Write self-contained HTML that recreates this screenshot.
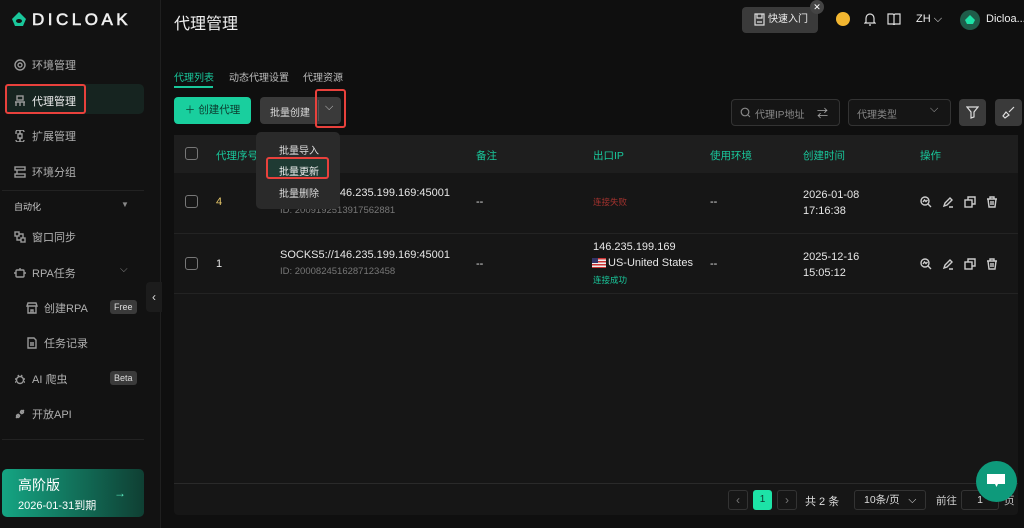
<!DOCTYPE html>
<html><head><meta charset="utf-8"><style>
*{margin:0;padding:0;box-sizing:border-box}
body{width:1024px;height:528px;overflow:hidden;background:#0f0f0f;font-family:"Liberation Sans","Noto Sans CJK SC",sans-serif;color:#ddd;position:relative;font-size:12px}
.a{position:absolute}
.side{left:0;top:0;width:161px;height:528px;background:#121212;border-right:1px solid #1f1f1f}
.nav{position:absolute;left:14px;font-size:11px;color:#b0b0b0;display:flex;align-items:center;gap:6px}
.nav svg{width:12px;height:12px;stroke:#999;fill:none;stroke-width:1.4}
.badge{position:absolute;left:110px;background:#3a3a3a;color:#ddd;font-size:9px;padding:2px 4px;border-radius:3px}
.g{color:#19c79b}
.th{position:absolute;top:148px;font-size:10.5px;color:#19c79b}
.td{position:absolute;font-size:11px;color:#e6e6e6}
.sub{font-size:9.5px;color:#777}
.cb{position:absolute;left:185px;width:13px;height:13px;border:1.3px solid #777;border-radius:3px}
.ic{position:absolute;width:12px;height:12px;stroke:#ccc;fill:none;stroke-width:1.4}
.red{position:absolute;border:2px solid #e8413c;border-radius:3px}
</style></head><body>
<div class="a side"></div>
<svg class="a" style="left:10px;top:11px" width="18" height="18" viewBox="0 0 18 18"><path d="M9 1L16 8 13 15H5L2 8Z" fill="#19c79b"/><ellipse cx="9" cy="10" rx="3" ry="2" fill="#121212"/></svg>
<div class="a" style="left:32px;top:10px;font-size:17px;font-weight:normal;letter-spacing:3.5px;color:#eee;-webkit-text-stroke:0.6px #eee">DICLOAK</div>
<div class="nav" style="top:57px"><svg viewBox="0 0 12 12"><circle cx="6" cy="6" r="5"/><circle cx="6" cy="6" r="2"/></svg>环境管理</div>
<div class="a" style="left:5px;top:84px;width:139px;height:30px;background:#162420;border-radius:5px"></div>
<div class="red" style="left:5px;top:84px;width:81px;height:30px"></div>
<div class="nav" style="top:93px;color:#eee"><svg viewBox="0 0 12 12"><rect x="3" y="1" width="6" height="4"/><path d="M1 7h10M2 7v4M6 7v4M10 7v4"/></svg>代理管理</div>
<div class="nav" style="top:128px"><svg viewBox="0 0 12 12"><path d="M4 4h4v4H4zM4 4a2 2 0 1 0-2-2v2M8 4a2 2 0 1 1 2-2M4 8a2 2 0 1 1-2 2M8 8a2 2 0 1 0 2 2"/></svg>扩展管理</div>
<div class="nav" style="top:164px"><svg viewBox="0 0 12 12"><rect x="1" y="1" width="10" height="3"/><rect x="1" y="8" width="10" height="3"/><path d="M3 4v4"/></svg>环境分组</div>
<div class="a" style="left:2px;top:190px;width:142px;height:1px;background:#222"></div>
<div class="a" style="left:14px;top:200px;font-size:9px;color:#ccc">自动化</div>
<div class="a" style="left:121px;top:200px;font-size:8px;color:#888">▼</div>
<div class="nav" style="top:229px"><svg viewBox="0 0 12 12"><rect x="1" y="1" width="4" height="4"/><rect x="7" y="7" width="4" height="4"/><path d="M3 5v4h4M9 7V3H5"/></svg>窗口同步</div>
<div class="nav" style="top:265px"><svg viewBox="0 0 12 12"><rect x="2" y="3" width="8" height="7" rx="1"/><path d="M6 1v2M0 6h2M10 6h2"/></svg>RPA任务</div>
<div class="a" style="left:120px;top:264px;font-size:10px;color:#888">⌵</div>
<div class="nav" style="top:300px;left:26px"><svg viewBox="0 0 12 12"><path d="M1 4h10l-1-3H2zM2 4v7h8V4M5 11V8h2v3"/></svg>创建RPA</div>
<div class="badge" style="top:300px">Free</div>
<div class="nav" style="top:335px;left:26px"><svg viewBox="0 0 12 12"><path d="M2 1h6l2 2v8H2zM4 6h4M4 8h4"/></svg>任务记录</div>
<div class="nav" style="top:371px"><svg viewBox="0 0 12 12"><circle cx="6" cy="7" r="3.5"/><path d="M4 2l1 2M8 2L7 4M1 6h1M10 6h1M1 9h1M10 9h1"/></svg>AI 爬虫</div>
<div class="badge" style="top:371px">Beta</div>
<div class="nav" style="top:406px"><svg viewBox="0 0 12 12"><path d="M2 10l3-3M7 5l3-3M4 6l2 2M6 4l2 2"/><circle cx="4" cy="8" r="1.5"/><circle cx="8" cy="4" r="1.5"/></svg>开放API</div>
<div class="a" style="left:2px;top:439px;width:142px;height:1px;background:#222"></div>
<div class="a" style="left:2px;top:469px;width:142px;height:48px;border-radius:5px;background:linear-gradient(90deg,#15a583,#0f3f33)"></div>
<div class="a" style="left:18px;top:475px;font-size:14px;color:#fff">高阶版</div>
<div class="a" style="left:18px;top:497px;font-size:11px;color:#fff">2026-01-31到期</div>
<div class="a" style="left:114px;top:486px;font-size:12px;color:#5ef0c4">→</div>
<div class="a" style="left:146px;top:282px;width:16px;height:30px;background:#1c1c1c;border-radius:4px 0 0 4px;color:#ddd;font-size:12px;text-align:center;line-height:30px">‹</div>

<div class="a" style="left:174px;top:10px;font-size:16px;color:#f0f0f0">代理管理</div>
<div class="a" style="left:742px;top:7px;width:76px;height:26px;background:#3a3a3a;border-radius:4px;font-size:10px;color:#eee;line-height:26px;padding-left:26px">快速入门</div>
<svg class="a" style="left:754px;top:13px" width="11" height="13" viewBox="0 0 11 13"><path d="M1 1h9v11H1zM3 1v4h5V1M3 9h5" stroke="#ddd" fill="none" stroke-width="1.2"/></svg>
<div class="a" style="left:810px;top:0px;width:14px;height:14px;border-radius:7px;background:#444;color:#fff;font-size:9px;text-align:center;line-height:14px">✕</div>
<div class="a" style="left:836px;top:12px;width:14px;height:14px;border-radius:7px;background:#f2b630"></div>
<svg class="a" style="left:864px;top:12px" width="12" height="14" viewBox="0 0 12 14"><path d="M2 10V6a4 4 0 0 1 8 0v4l1 1H1zM5 13h2" stroke="#ddd" fill="none" stroke-width="1.2"/></svg>
<svg class="a" style="left:887px;top:13px" width="14" height="12" viewBox="0 0 14 12"><path d="M1 1h5l1 1 1-1h5v10H8l-1 1-1-1H1zM7 2v9" stroke="#ddd" fill="none" stroke-width="1.2"/></svg>
<div class="a" style="left:916px;top:13px;font-size:11px;color:#eee">ZH ⌵</div>
<div class="a" style="left:960px;top:10px;width:20px;height:20px;border-radius:10px;background:#1f5d4a"></div>
<svg class="a" style="left:964px;top:14px" width="12" height="12" viewBox="0 0 12 12"><path d="M6 1l5 5-2 4H3L1 6z" fill="#1de3a7"/></svg>
<div class="a" style="left:986px;top:13px;font-size:11px;color:#eee">Dicloa...</div>

<div class="a g" style="left:174px;top:69px;font-size:10px">代理列表</div>
<div class="a" style="left:229px;top:69px;font-size:10px;color:#bbb">动态代理设置</div>
<div class="a" style="left:303px;top:69px;font-size:10px;color:#bbb">代理资源</div>
<div class="a" style="left:174px;top:86px;width:39px;height:2px;background:#19c79b"></div>
<div class="a" style="left:174px;top:97px;width:77px;height:27px;background:#19cf9e;border-radius:4px;color:#0c3b2f;font-size:10.5px;line-height:27px;text-align:center">＋ 创建代理</div>
<div class="a" style="left:260px;top:97px;width:81px;height:27px;background:#3a3a3a;border-radius:4px"></div>
<div class="a" style="left:270px;top:104px;font-size:10px;color:#ddd">批量创建</div>
<div class="a" style="left:318px;top:100px;width:1px;height:21px;background:#555"></div>
<div class="a" style="left:325px;top:101px;font-size:11px;color:#ccc">⌵</div>
<div class="red" style="left:315px;top:89px;width:31px;height:39px"></div>
<div class="a" style="left:731px;top:99px;width:109px;height:27px;border:1px solid #333;border-radius:4px;background:#151515"></div>
<svg class="a" style="left:740px;top:107px" width="11" height="11" viewBox="0 0 11 11"><circle cx="5" cy="5" r="3.8" stroke="#888" fill="none" stroke-width="1.2"/><path d="M8 8l2 2" stroke="#888"/></svg>
<div class="a" style="left:755px;top:106px;font-size:10px;color:#888">代理IP地址</div>
<div class="a" style="left:817px;top:105px;font-size:11px;color:#aaa">⇄</div>
<div class="a" style="left:848px;top:99px;width:103px;height:27px;border:1px solid #333;border-radius:4px;background:#151515"></div>
<div class="a" style="left:857px;top:106px;font-size:10px;color:#888">代理类型</div>
<div class="a" style="left:930px;top:103px;font-size:11px;color:#aaa">⌵</div>
<div class="a" style="left:959px;top:99px;width:27px;height:27px;background:#3a3a3a;border-radius:4px"></div>
<svg class="a" style="left:966px;top:106px" width="13" height="13" viewBox="0 0 13 13"><path d="M1 1h11L8 6v5L5 12V6z" stroke="#ddd" fill="none" stroke-width="1.2"/></svg>
<div class="a" style="left:995px;top:99px;width:27px;height:27px;background:#3a3a3a;border-radius:4px"></div>
<svg class="a" style="left:1002px;top:106px" width="13" height="13" viewBox="0 0 13 13"><path d="M12 1L7 6M4 6l3 3-4 3-2-2z" stroke="#ddd" fill="none" stroke-width="1.2"/></svg>

<div class="a" style="left:174px;top:135px;width:844px;height:380px;background:#161616;border-radius:4px"></div>
<div class="a" style="left:174px;top:135px;width:844px;height:38px;background:#1e1e1e"></div>
<div class="a" style="left:174px;top:233px;width:844px;height:1px;background:#232323"></div>
<div class="a" style="left:174px;top:293px;width:844px;height:1px;background:#232323"></div>
<div class="a" style="left:174px;top:483px;width:844px;height:1px;background:#2a2a2a"></div>
<div class="cb" style="top:147px"></div>
<div class="th" style="left:216px">代理序号</div>
<div class="th" style="left:476px">备注</div>
<div class="th" style="left:593px">出口IP</div>
<div class="th" style="left:710px">使用环境</div>
<div class="th" style="left:803px">创建时间</div>
<div class="th" style="left:920px">操作</div>
<div class="cb" style="top:195px"></div>
<div class="td" style="left:216px;top:196px;color:#e8c86a">4</div>
<div class="td" style="left:280px;top:187px">SOCKS5://146.235.199.169:45001</div>
<div class="td sub" style="left:280px;top:205px">ID: 2009192513917562881</div>
<div class="td" style="left:476px;top:196px">--</div>
<div class="td" style="left:593px;top:196px;font-size:8.5px;color:#a3322e">连接失败</div>
<div class="td" style="left:710px;top:196px">--</div>
<div class="td" style="left:803px;top:187px;line-height:16px">2026-01-08<br>17:16:38</div>
<div class="cb" style="top:257px"></div>
<div class="td" style="left:216px;top:258px">1</div>
<div class="td" style="left:280px;top:249px">SOCKS5://146.235.199.169:45001</div>
<div class="td sub" style="left:280px;top:266px">ID: 2000824516287123458</div>
<div class="td" style="left:476px;top:258px">--</div>
<div class="td" style="left:593px;top:241px">146.235.199.169</div>
<div class="a" style="left:592px;top:258px;width:14px;height:10px;background:repeating-linear-gradient(#c33 0 1.5px,#eee 1.5px 3px)"><div style="width:6px;height:5px;background:#336"></div></div>
<div class="td" style="left:608px;top:257px">US-United States</div>
<div class="td" style="left:593px;top:274px;font-size:8.5px;color:#19c79b">连接成功</div>
<div class="td" style="left:710px;top:258px">--</div>
<div class="td" style="left:803px;top:249px;line-height:16px">2025-12-16<br>15:05:12</div>
<svg class="ic" style="left:920px;top:196px" viewBox="0 0 12 12"><circle cx="5" cy="5" r="4"/><path d="M8 8l3 3M3 6l1.5-2 1.5 1.5L7.5 4"/></svg>
<svg class="ic" style="left:942px;top:196px" viewBox="0 0 12 12"><path d="M2 10l1-3 5-5 2 2-5 5zM7 11h4"/></svg>
<svg class="ic" style="left:964px;top:196px" viewBox="0 0 12 12"><rect x="1" y="4" width="7" height="7"/><path d="M4 4V1h7v7H8"/></svg>
<svg class="ic" style="left:986px;top:196px" viewBox="0 0 12 12"><path d="M1 3h10M4 3V1h4v2M2 3l1 8h6l1-8M5 5v4M7 5v4"/></svg>
<svg class="ic" style="left:920px;top:258px" viewBox="0 0 12 12"><circle cx="5" cy="5" r="4"/><path d="M8 8l3 3M3 6l1.5-2 1.5 1.5L7.5 4"/></svg>
<svg class="ic" style="left:942px;top:258px" viewBox="0 0 12 12"><path d="M2 10l1-3 5-5 2 2-5 5zM7 11h4"/></svg>
<svg class="ic" style="left:964px;top:258px" viewBox="0 0 12 12"><rect x="1" y="4" width="7" height="7"/><path d="M4 4V1h7v7H8"/></svg>
<svg class="ic" style="left:986px;top:258px" viewBox="0 0 12 12"><path d="M1 3h10M4 3V1h4v2M2 3l1 8h6l1-8M5 5v4M7 5v4"/></svg>
<div class="a" style="left:256px;top:132px;width:84px;height:77px;background:#2a2a2a;border-radius:5px"></div>
<div class="a" style="left:279px;top:142px;font-size:10px;color:#ddd">批量导入</div>
<div class="a" style="left:266px;top:157px;width:63px;height:22px;background:#1f3a33;border:2px solid #e8413c;border-radius:3px"></div>
<div class="a" style="left:279px;top:163px;font-size:10px;color:#eee">批量更新</div>
<div class="a" style="left:279px;top:185px;font-size:10px;color:#ddd">批量删除</div>
<div class="a" style="left:728px;top:490px;width:20px;height:20px;border:1px solid #333;border-radius:3px;color:#777;text-align:center;line-height:18px">‹</div>
<div class="a" style="left:753px;top:490px;width:19px;height:20px;background:#1de3a7;border-radius:3px;color:#0c3b2f;text-align:center;line-height:20px;font-size:10px">1</div>
<div class="a" style="left:777px;top:490px;width:20px;height:20px;border:1px solid #333;border-radius:3px;color:#777;text-align:center;line-height:18px">›</div>
<div class="a" style="left:805px;top:493px;font-size:11px;color:#ddd">共 2 条</div>
<div class="a" style="left:854px;top:490px;width:72px;height:20px;border:1px solid #333;border-radius:3px;font-size:10.5px;color:#ddd;line-height:18px;padding-left:9px">10条/页 &nbsp;&nbsp;⌵</div>
<div class="a" style="left:936px;top:493px;font-size:10.5px;color:#ccc">前往</div>
<div class="a" style="left:961px;top:490px;width:38px;height:20px;border:1px solid #333;border-radius:3px;font-size:10.5px;color:#ddd;line-height:18px;text-align:center">1</div>
<div class="a" style="left:1004px;top:493px;font-size:10.5px;color:#ccc">页</div>
<div class="a" style="left:976px;top:461px;width:41px;height:41px;border-radius:21px;background:#0e9a7b"></div>
<svg class="a" style="left:986px;top:473px" width="20" height="17" viewBox="0 0 20 17"><path d="M1 1h18v10h-7l-1.5 3-1.5-3H1z" fill="#fff"/></svg>
</body></html>
